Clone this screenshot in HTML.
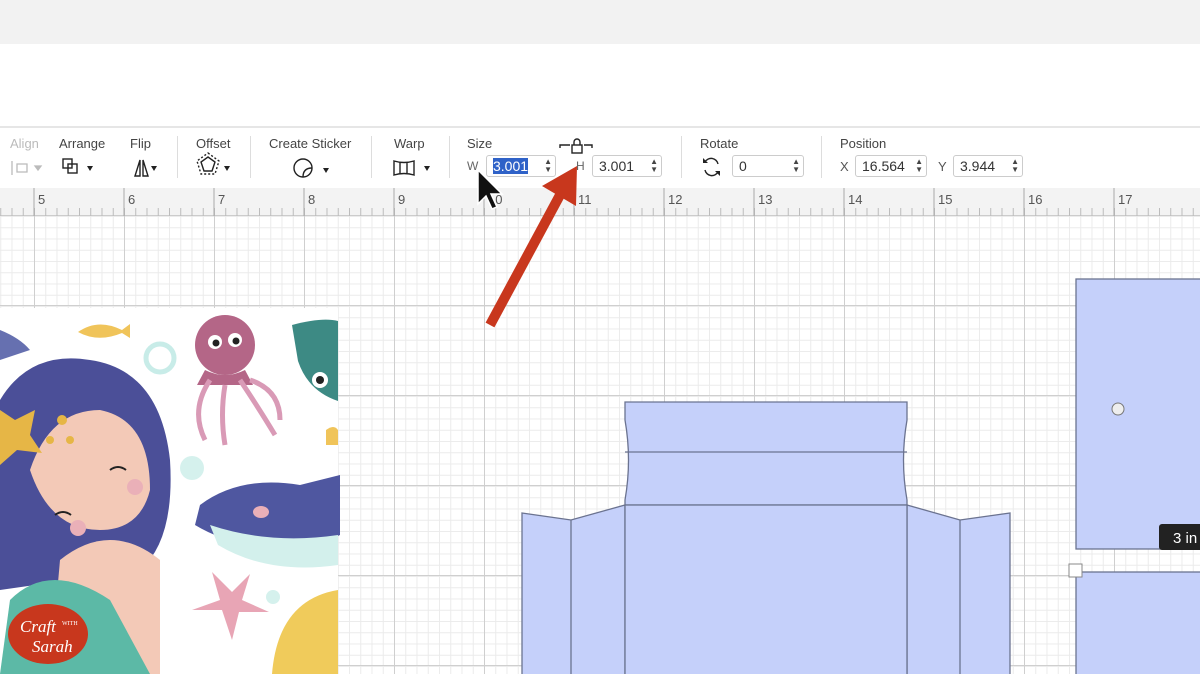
<!DOCTYPE html>
<html><head><meta charset="utf-8"><style>
*{margin:0;padding:0;box-sizing:border-box}
body{width:1200px;height:674px;overflow:hidden;position:relative;background:#fff;font-family:"Liberation Sans",sans-serif;color:#333}
.abs{position:absolute}
#top{left:0;top:0;width:1200px;height:44px;background:#f2f2f2}
#tb{left:0;top:126px;width:1200px;height:62px;background:#fff;border-top:2px solid #e6e6e6}
.lbl{position:absolute;font-size:13px;color:#444;top:8px}
.sep{position:absolute;top:8px;width:1px;height:42px;background:#ddd}
.inp{position:absolute;top:27px;height:22px;border:1px solid #ccc;border-radius:3px;font-size:14px;padding:2px 6px;color:#333;background:#fff}
.sp{position:absolute;right:3px;top:2px;font-size:8px;line-height:8px;color:#444}
#ruler{left:0;top:188px;width:1200px;height:28px;background:#f3f3f3;border-bottom:1px solid #ccc}
#ticks{left:0;top:20px;width:1200px;height:8px;background-image:linear-gradient(to right,#bbb 1px,transparent 1px);background-size:11.25px 8px;background-position:34px 0}
.rn{position:absolute;top:4px;font-size:13px;color:#555}
#grid{left:0;top:216px;width:1200px;height:458px;
background-image:
linear-gradient(to right,#cfcfcf 1px,transparent 1px),
linear-gradient(to bottom,#cfcfcf 1px,transparent 1px),
linear-gradient(to right,#ebebeb 1px,transparent 1px),
linear-gradient(to bottom,#ebebeb 1px,transparent 1px);
background-size:90px 90px,90px 90px,11.25px 11.25px,11.25px 11.25px;
background-position:34px 89px,34px 89px,34px 0,34px 0}
</style></head><body>
<div id="top" class="abs"></div>
<div id="tb" class="abs">
 <div class="lbl" style="left:10px;color:#bbb">Align</div>
 <div class="lbl" style="left:59px">Arrange</div>
 <div class="lbl" style="left:130px">Flip</div>
 <div class="sep" style="left:177px"></div>
 <div class="lbl" style="left:196px">Offset</div>
 <div class="sep" style="left:250px"></div>
 <div class="lbl" style="left:269px">Create Sticker</div>
 <div class="sep" style="left:371px"></div>
 <div class="lbl" style="left:394px">Warp</div>
 <div class="sep" style="left:449px"></div>
 <div class="lbl" style="left:467px">Size</div>
 <div class="lbl" style="left:467px;top:31px;font-size:12px;color:#666">W</div>
 <div class="inp" style="left:486px;width:70px"><span style="background:#2f62c8;color:#fff">3.001</span><div class="sp">▲<br>▼</div></div>
 <div class="lbl" style="left:576px;top:31px;font-size:12px;color:#666">H</div>
 <div class="inp" style="left:592px;width:70px">3.001<div class="sp">▲<br>▼</div></div>
 <div class="sep" style="left:681px"></div>
 <div class="lbl" style="left:700px">Rotate</div>
 <div class="inp" style="left:732px;width:72px">0<div class="sp">▲<br>▼</div></div>
 <div class="sep" style="left:821px"></div>
 <div class="lbl" style="left:840px">Position</div>
 <div class="lbl" style="left:840px;top:31px;font-size:13px;color:#555">X</div>
 <div class="inp" style="left:855px;width:72px">16.564<div class="sp">▲<br>▼</div></div>
 <div class="lbl" style="left:938px;top:31px;font-size:13px;color:#555">Y</div>
 <div class="inp" style="left:953px;width:70px">3.944<div class="sp">▲<br>▼</div></div>
 <svg class="abs" style="left:0;top:0" width="1200" height="62">
  <g fill="none" stroke="#bbb" stroke-width="1.3"><path d="M12 33v14M17 36h10v8h-10z"/><path d="M35 38l3 4 3-4z" fill="#bbb"/></g>
  <g fill="none" stroke="#222" stroke-width="1.4"><rect x="63" y="31" width="9" height="9"/><rect x="68" y="36" width="9" height="9"/>
  <path d="M135 48l5-16v16zM143 32l5 16h-5z"/>
  <path d="M208 29l7 5-3 9h-8l-3-9z"/><path d="M208 25l11 8-4 13h-14l-4-13z" stroke-dasharray="2 2"/>
  <circle cx="303" cy="40" r="9"/><path d="M303 49c0-6 3-9 9-9"/>
  <path d="M394 33q10 3 20 0v14q-10-3-20 0zM400 34v12M407 34v12"/>
  <path d="M560 20v-3h10M584 17h8v3"/><rect x="572" y="17" width="10" height="8"/><path d="M574 17v-3a3 3 0 0 1 6 0v3"/>
  <path d="M718 36a7 7 0 0 0-13-2M705 42a7 7 0 0 0 13 2"/></g>
  <g fill="#222"><path d="M87 38l3 5 3-5zM151 38l3 5 3-5zM224 38l3 5 3-5zM323 40l3 5 3-5zM424 38l3 5 3-5z"/>
  <path d="M703 30v5h5zM720 48v-5h-5z"/></g>
 </svg>
</div>
<div id="ruler" class="abs">
 <div id="ticks" class="abs"></div>
 <svg class="abs" style="left:0;top:0" width="1200" height="28"><g stroke="#aaa">
 <path d="M34 0v28M124 0v28M214 0v28M304 0v28M394 0v28M484 0v28M574 0v28M664 0v28M754 0v28M844 0v28M934 0v28M1024 0v28M1114 0v28"/>
 </g></svg>
 <div class="rn" style="left:38px">5</div><div class="rn" style="left:128px">6</div><div class="rn" style="left:218px">7</div><div class="rn" style="left:308px">8</div><div class="rn" style="left:398px">9</div><div class="rn" style="left:488px">10</div><div class="rn" style="left:578px">11</div><div class="rn" style="left:668px">12</div><div class="rn" style="left:758px">13</div><div class="rn" style="left:848px">14</div><div class="rn" style="left:938px">15</div><div class="rn" style="left:1028px">16</div><div class="rn" style="left:1118px">17</div>
</div>
<div id="grid" class="abs"></div>
<svg class="abs" style="left:0;top:0" width="1200" height="674">
 <g fill="#c5d0fa" stroke="#6b7390" stroke-width="1.3">
  <path d="M625 402H907V420Q900 460 907 500V505H625V500Q632 460 625 420Z"/>
  <path d="M625 452H907"/>
  <path d="M522 513L571 520L625 505V680H522Z"/><path d="M571 520V680"/>
  <path d="M907 505L960 520L1010 513V680H907Z"/><path d="M960 520V680"/>
  <rect x="625" y="505" width="282" height="180"/>
  <rect x="1076" y="279" width="140" height="270"/>
  <rect x="1076" y="572" width="140" height="110"/>
 </g>
 <circle cx="1118" cy="409" r="6" fill="#eee" stroke="#777"/>
 <rect x="1069" y="564" width="13" height="13" fill="#fff" stroke="#888"/>
 <rect x="1159" y="524" width="50" height="26" rx="3" fill="#222"/>
 <text x="1173" y="543" fill="#fff" font-size="15" font-family="Liberation Sans">3 in</text>
 <rect x="0" y="308" width="338" height="366" fill="#fff"/>
 <path d="M78 332q20-14 44-2l8-6v14l-8-5q-24 10-44-1z" fill="#f0c45a"/>
 <path d="M0 330q20 8 30 20l-30 10z" fill="#6670b0"/>
 <circle cx="160" cy="358" r="14" fill="none" stroke="#c8ece8" stroke-width="5"/>
 <ellipse cx="225" cy="345" rx="30" ry="30" fill="#b46687"/>
 <path d="M205 370q20 10 40 0l8 15h-56z" fill="#b46687"/>
 <path d="M210 380q-20 30-5 60M225 385q-5 30 0 60M240 380q20 30 35 55M250 380q30 10 30 40" stroke="#d99ab6" stroke-width="5" fill="none"/>
 <circle cx="215" cy="342" r="7" fill="#fff"/><circle cx="235" cy="340" r="7" fill="#fff"/>
 <circle cx="216" cy="343" r="3.5" fill="#222"/><circle cx="236" cy="341" r="3.5" fill="#222"/>
 <path d="M292 325q30-8 46-4v80q-30-10-40-40z" fill="#3d8a84"/>
 <circle cx="320" cy="380" r="8" fill="#fff"/><circle cx="320" cy="380" r="4" fill="#222"/>
 <path d="M0 400q30-50 90-40q70 10 80 100q5 80-30 110l-140 20z" fill="#4b4f98"/>
 <path d="M30 470q20-60 70-60q50 10 50 80q-10 40-50 40q-50 0-70-60z" fill="#f3c9b7"/>
 <path d="M0 410l15 10 20-10-5 25 12 18-25-3-17 15z" fill="#e6b646"/>
 <circle cx="62" cy="420" r="5" fill="#e6b646"/><circle cx="50" cy="440" r="4" fill="#e6b646"/><circle cx="70" cy="440" r="4" fill="#e6b646"/>
 <circle cx="78" cy="528" r="8" fill="#eab0b8"/><circle cx="135" cy="487" r="8" fill="#eab0b8"/>
 <path d="M55 515q8-6 16 0M110 470q8-6 16 0" stroke="#222" stroke-width="2" fill="none"/>
 <path d="M60 560q50-40 100 0v114H50z" fill="#f3c9b7"/>
 <path d="M10 600q40-40 100 0l40 74H0z" fill="#5cb9a6"/>
 <path d="M200 505q40-30 100-20l40-10v60q-40 20-90 10q-30-5-55-20z" fill="#4f57a0"/>
 <path d="M210 525q60 20 128 10v30q-70 10-120-20z" fill="#d3f0ec"/>
 <ellipse cx="261" cy="512" rx="8" ry="6" fill="#eab0b8"/>
 <path d="M212 572l8 28-28 10h30l10 30 7-28h30l-27-12 8-26-18 18z" fill="#e8a5b5"/>
 <path d="M338 590q-60 10-66 84h66z" fill="#f0cb5b"/>
 <circle cx="192" cy="468" r="12" fill="#d5f1ed"/><circle cx="273" cy="597" r="7" fill="#d5f1ed"/>
 <path d="M326 430q8-6 12 0v15h-12z" fill="#f0c45a"/>
 <ellipse cx="48" cy="634" rx="40" ry="30" fill="#c8371d"/>
 <text x="20" y="632" fill="#fff" font-size="17" font-style="italic" font-family="Liberation Serif">Craft</text>
 <text x="62" y="625" fill="#fff" font-size="6" font-family="Liberation Serif">WITH</text>
 <text x="32" y="652" fill="#fff" font-size="17" font-style="italic" font-family="Liberation Serif">Sarah</text>
 <path d="M490 325L560 195" stroke="#c8371d" stroke-width="10"/>
 <path d="M577 166L542 186L576 206z" fill="#c8371d"/>
 <path d="M478 170v34l8-8 6 13 5-2-6-13h11z" fill="#111" stroke="#fff" stroke-width="1.5"/>
</svg>
</body></html>
